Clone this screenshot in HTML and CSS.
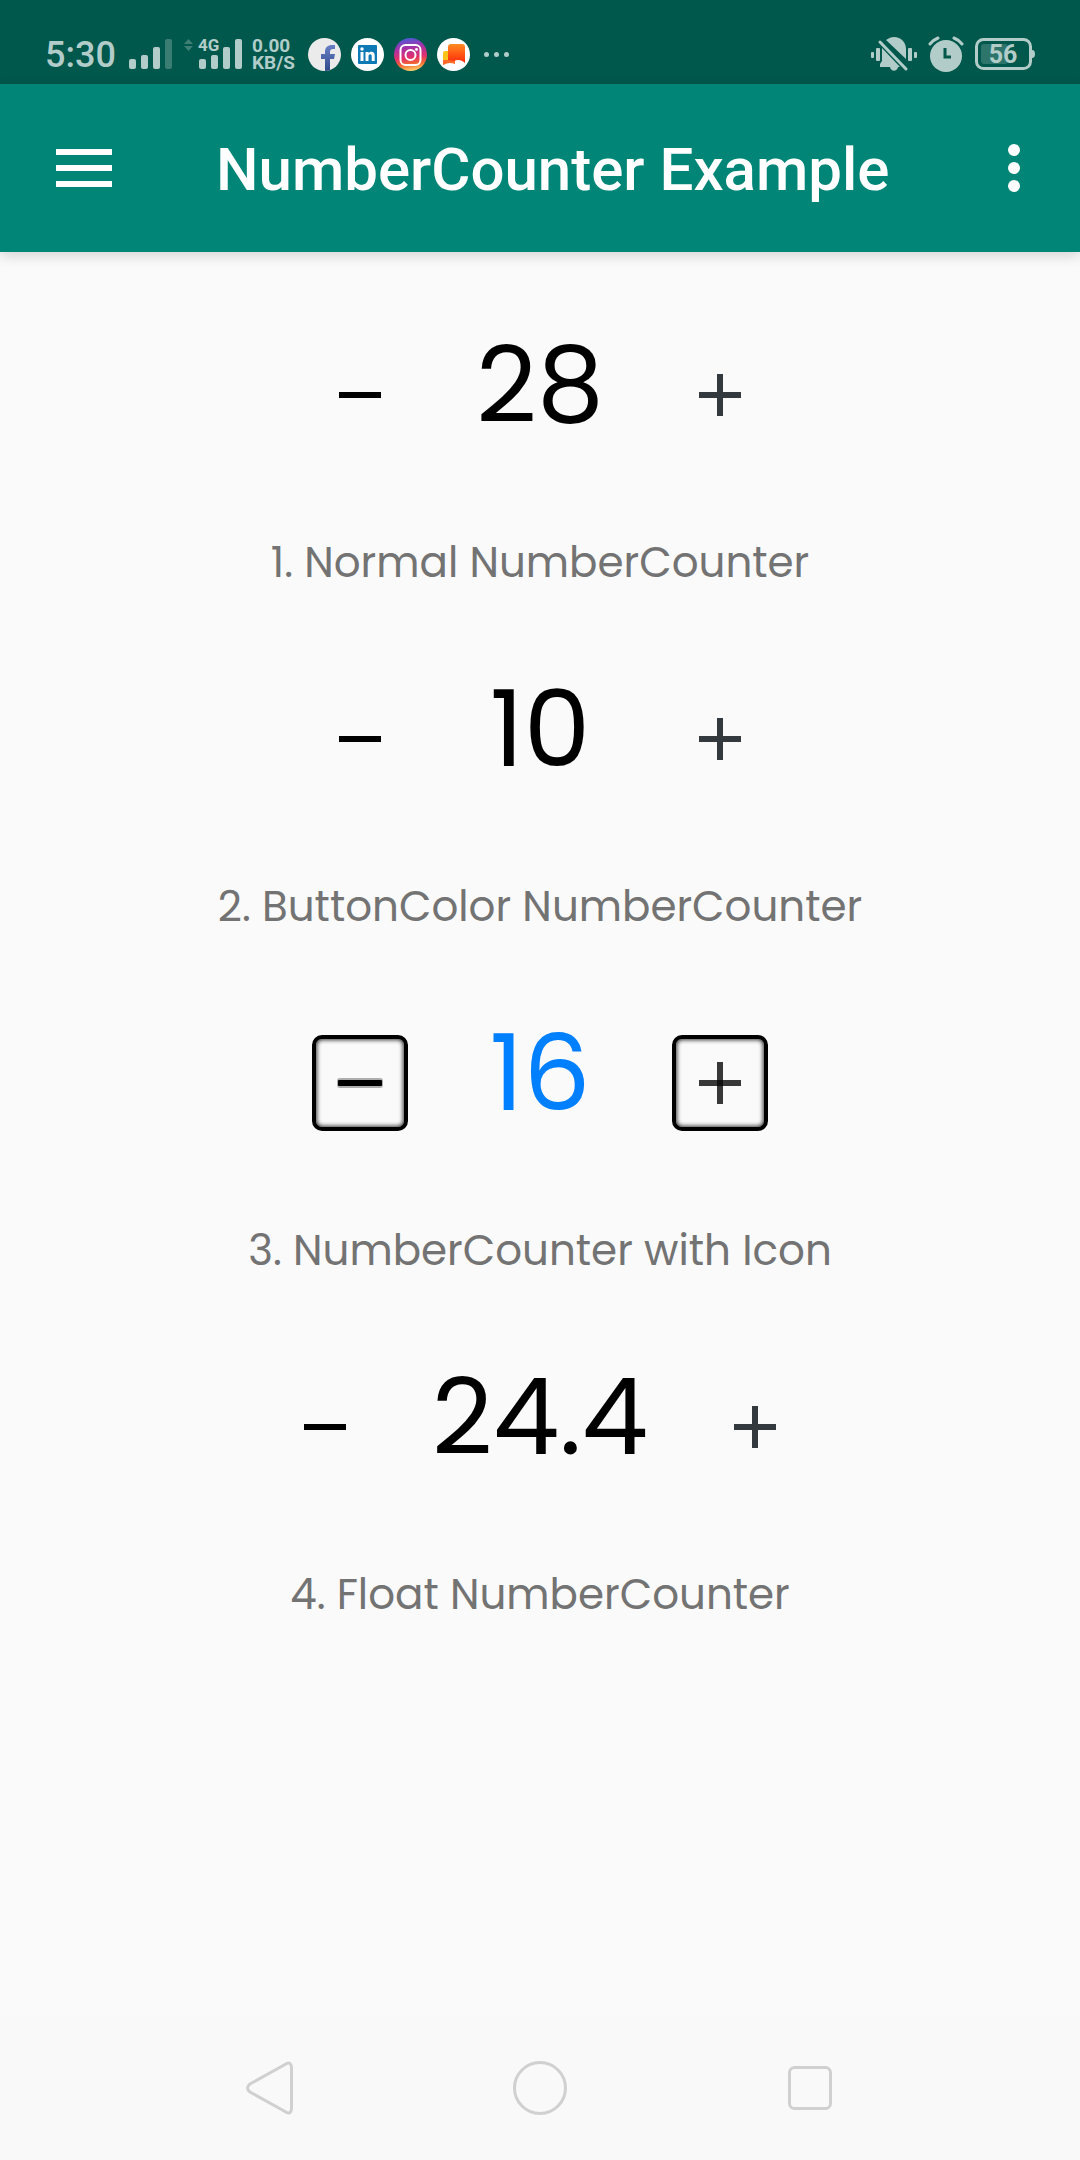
FILE: index.html
```html
<!DOCTYPE html>
<html lang="en">
<head>
<meta charset="utf-8">
<meta name="viewport" content="width=device-width, initial-scale=1">
<title>NumberCounter Example</title>
<link rel="stylesheet" href="styles.css">
</head>
<body>
<div class="status">
  <div class="status-side">
    <span class="clock">5:30</span>
    <svg class="signal" width="43" height="30" viewBox="0 0 43 30" aria-hidden="true"><g fill="currentColor"><rect y="20" width="7" height="10" rx="2"/><rect x="12" y="16" width="7" height="14" rx="2"/><rect x="24" y="8" width="7" height="22" rx="2"/><rect x="36" width="7" height="30" rx="2" opacity=".32"/></g></svg>
    <svg class="signal-data" width="58" height="46" viewBox="0 -8 58 46" aria-hidden="true"><g fill="currentColor"><path d="M0 5 4.500 0 9 5zM0 7h9l-4.500 5z" opacity=".35"/><rect x="15" y="20" width="7" height="10" rx="2"/><rect x="27" y="16" width="7" height="14" rx="2"/><rect x="39" y="8" width="7" height="22" rx="2"/><rect x="51" width="7" height="30" rx="2"/><text class="net" x="14" y="12">4G</text></g></svg>
    <span class="speed"><span>0.00</span><span>KB/S</span></span>
    <span class="apps">
      <svg width="33" height="33" viewBox="0 0 33 33" aria-hidden="true"><defs><linearGradient id="fb" x2="0" y2="1"><stop stop-color="#6a80c6"/><stop offset="1" stop-color="#2f4a8c"/></linearGradient><clipPath id="disc"><circle cx="16.500" cy="16.500" r="16.500"/></clipPath></defs><g clip-path="url(#disc)"><path fill="#ebebeb" d="M0 0h33v33H0z"/><path fill="url(#fb)" d="M17 33V21h-4v-5h4v-2c0-5 3-7 7-7h3v4h-2c-2 0-3 1-3 3v2h5l-1 5h-4v12z"/></g></svg>
      <svg width="33" height="33" viewBox="0 0 33 33" aria-hidden="true"><circle cx="16.500" cy="16.500" r="16.500" fill="#fff"/><rect x="7" y="7" width="19" height="19" rx="1" fill="#0d79b5"/><g fill="#fff"><circle cx="11" cy="11" r="1.700"/><path d="M9.500 14h3v9h-3zM14.500 14h3v1.300c.6-1 1.600-1.500 2.900-1.500 2.600 0 3.300 1.700 3.300 4.200v5h-3v-4.500c0-1.200-.2-2.200-1.500-2.200s-1.700 1-1.700 2.200V23h-3z"/></g></svg>
      <svg width="33" height="33" viewBox="0 0 33 33" aria-hidden="true"><defs><linearGradient id="ig" x1=".35" y1="0" x2=".5" y2="1"><stop stop-color="#4b5bd8"/><stop offset=".3" stop-color="#a632a8"/><stop offset=".6" stop-color="#e2306c"/><stop offset=".8" stop-color="#f46a30"/><stop offset="1" stop-color="#ffd36b"/></linearGradient></defs><circle cx="16.500" cy="16.500" r="16.500" fill="url(#ig)"/><g fill="none" stroke="#fff" stroke-width="2"><rect x="6.500" y="7" width="20" height="20" rx="5"/><circle cx="16.500" cy="17" r="5"/></g><circle cx="22.500" cy="11.500" r="1.400" fill="#fff"/></svg>
      <svg width="33" height="33" viewBox="0 0 33 33" aria-hidden="true"><defs><linearGradient id="ch" x2="0" y2="1"><stop stop-color="#ff8a1f"/><stop offset="1" stop-color="#ff2a0a"/></linearGradient></defs><circle cx="16.500" cy="16.500" r="16.500" fill="#fff"/><path fill="#ffc21a" d="M8 13h6v10l-8 4V15q0-2 2-2z"/><path fill="#ff6a2b" d="M6 27v-5h12v4c-5-2-8-1-12 1z"/><path fill="url(#ch)" d="M14 6h11q3 0 3 3v16c-3-3-7-4-11-2l-6-1V9q0-3 3-3z"/></svg>
    </span>
    <svg width="25" height="5" viewBox="0 0 25 5" aria-hidden="true"><g fill="currentColor"><circle cx="2.500" cy="2.500" r="2.500"/><circle cx="12.500" cy="2.500" r="2.500"/><circle cx="22.500" cy="2.500" r="2.500"/></g></svg>
  </div>
  <div class="status-side status-right">
    <svg width="46" height="36" viewBox="0 0 46 36" aria-hidden="true"><g fill="currentColor"><rect y="16" width="3" height="6" rx="1"/><rect x="5" y="12" width="4" height="13" rx="1"/><rect x="37" y="12" width="4" height="13" rx="1"/><rect x="43" y="16" width="3" height="6" rx="1"/><path d="M15 4C18 2 20 1 23 1c7 0 12 5 12 12v10zM11 12l18 19h-2c-1 5-7 5-8 0H9v-3l2-3z"/></g><path d="M9 6l26 27" stroke="currentColor" stroke-width="3" stroke-linecap="round"/></svg>
    <svg width="36" height="36" viewBox="0 0 36 36" aria-hidden="true"><circle cx="18" cy="20" r="16" fill="currentColor"/><g fill="none" stroke="currentColor" stroke-width="3" stroke-linecap="round"><path d="M2 8q3-4 8-6M34 8q-3-4-8-6"/></g><path d="M17 12v9h6" fill="none" stroke="#00574b" stroke-width="3"/></svg>
    <svg width="60" height="32" viewBox="0 0 60 32" aria-hidden="true"><rect x="1.500" y="1.500" width="54" height="29" rx="7" fill="none" stroke="currentColor" stroke-width="3"/><rect x="6" y="6" width="27" height="20" rx="3" fill="currentColor" opacity=".25"/><path d="M57 12q3 0 3 4t-3 4z" fill="currentColor"/><text class="charge" x="28" y="25" text-anchor="middle">56</text></svg>
  </div>
</div>
<header class="bar">
  <button class="icon-btn" type="button" aria-label="Open menu"><svg width="56" height="38" viewBox="0 0 56 38"><path d="M0 0h56v6H0zM0 16h56v6H0zM0 32h56v6H0z" fill="#fff"/></svg></button>
  <h1>NumberCounter Example</h1>
  <button class="icon-btn" type="button" aria-label="More options"><svg width="12" height="48" viewBox="0 0 12 48"><g fill="#fff"><circle cx="6" cy="6" r="6"/><circle cx="6" cy="24" r="6"/><circle cx="6" cy="42" r="6"/></g></svg></button>
</header>
<main>
  <section class="item">
    <div class="counter">
      <button class="step" type="button" aria-label="Decrease"><svg width="42" height="42" viewBox="0 0 42 42"><path d="M0 18h42v6H0z"/></svg></button>
      <output aria-labelledby="l1">28</output>
      <button class="step" type="button" aria-label="Increase"><svg width="42" height="42" viewBox="0 0 42 42"><path d="M18 0h6v18h18v6H24v18h-6V24H0v-6h18z" fill="#34393d"/></svg></button>
    </div>
    <p id="l1">1. Normal NumberCounter</p>
  </section>
  <section class="item">
    <div class="counter">
      <button class="step" type="button" aria-label="Decrease"><svg width="42" height="42" viewBox="0 0 42 42"><path d="M0 18h42v6H0z"/></svg></button>
      <output aria-labelledby="l2">10</output>
      <button class="step" type="button" aria-label="Increase"><svg width="42" height="42" viewBox="0 0 42 42"><path d="M18 0h6v18h18v6H24v18h-6V24H0v-6h18z" fill="#34393d"/></svg></button>
    </div>
    <p id="l2">2. ButtonColor NumberCounter</p>
  </section>
  <section class="item">
    <div class="counter">
      <button class="step boxed" type="button" aria-label="Decrease"><svg width="48" height="42" viewBox="0 0 48 42"><rect x="1" y="16" width="46" height="10" rx="3" opacity=".3"/><rect x="2" y="18" width="44" height="6" rx="1"/></svg></button>
      <output class="blue" aria-labelledby="l3">16</output>
      <button class="step boxed" type="button" aria-label="Increase"><svg width="42" height="42" viewBox="0 0 42 42"><path d="M18 0h6v18h18v6H24v18h-6V24H0v-6h18z" fill="#383838"/><path d="M18 18h6v6h-6z" fill="#111"/></svg></button>
    </div>
    <p id="l3">3. NumberCounter with Icon</p>
  </section>
  <section class="item">
    <div class="counter">
      <button class="step" type="button" aria-label="Decrease"><svg width="42" height="42" viewBox="0 0 42 42"><path d="M0 18h42v6H0z"/></svg></button>
      <output aria-labelledby="l4">24.4</output>
      <button class="step" type="button" aria-label="Increase"><svg width="42" height="42" viewBox="0 0 42 42"><path d="M18 0h6v18h18v6H24v18h-6V24H0v-6h18z" fill="#34393d"/></svg></button>
    </div>
    <p id="l4">4. Float NumberCounter</p>
  </section>
</main>
<nav class="nav" aria-label="System">
  <button type="button" aria-label="Back"><svg width="54" height="54" viewBox="0 0 54 54"><path d="M42 3.500Q47.500-.5 48.500 6v42q-1 6.500-6.500 2.500L7 31q-5-4 0-8z"/></svg></button>
  <button type="button" aria-label="Home"><svg width="54" height="54" viewBox="0 0 54 54"><circle cx="27" cy="27" r="25.500"/></svg></button>
  <button type="button" aria-label="Recent apps"><svg width="54" height="54" viewBox="0 0 54 54"><rect x="6.500" y="6.500" width="41" height="41" rx="5"/></svg></button>
</nav>
</body>
</html>
```

FILE: styles.css
```css
* { box-sizing: border-box; }

body {
  margin: 0;
  min-height: 100vh;
  display: flex;
  flex-direction: column;
  background: #fafafa;
  color: #000;
  font-family: Poppins, Inter, sans-serif;
}

button {
  padding: 0;
  border: 0;
  background: none;
}

svg { display: block; flex: none; }

.status {
  display: flex;
  justify-content: space-between;
  height: 84px;
  padding: 24px 45px 0;
  background: #00574b;
  color: #b2cdc9;
  font-family: Roboto, sans-serif;
  font-weight: 500;
}

.status-side { display: flex; align-items: center; }
.clock { width: 84px; padding-top: 2px; font-size: 36px; line-height: 36px; }
.signal { margin-right: 12px; }
.signal-data { margin-right: 10px; }
.net { font-size: 17px; font-weight: 700; }

.speed {
  display: flex;
  flex-direction: column;
  width: 56px;
  font-size: 19px;
  font-weight: 700;
  line-height: 17px;
}

.apps { display: flex; gap: 10px; margin-right: 14px; }
.status-right { gap: 11px; }
.charge { font-size: 25px; font-weight: 700; fill: #b2cdc9; }

.bar {
  display: flex;
  align-items: center;
  justify-content: space-between;
  height: 168px;
  padding: 0 60px 0 56px;
  background: #008577;
  box-shadow: 0 4px 12px rgba(0, 0, 0, .15);
  font-family: Roboto, sans-serif;
}

.bar h1 {
  flex: 1;
  margin: 0 0 0 104px;
  padding-top: 4px;
  color: #fff;
  font-size: 60px;
  font-weight: 500;
  line-height: 70px;
}

main { flex: 1; }
.item { padding-top: 8px; text-align: center; }

.counter {
  display: flex;
  align-items: center;
  justify-content: center;
  height: 270px;
}

.step {
  display: grid;
  place-items: center;
  width: 96px;
  height: 96px;
}

.boxed {
  border: 4px solid #000;
  border-radius: 10px;
  box-shadow: inset 0 0 4px 1px #333;
}

output {
  min-width: 264px;
  padding: 0 59px 20px;
  font-size: 106px;
  line-height: 120px;
}

.blue { color: #007fff; }

.item p {
  margin: 0;
  color: #737373;
  font-size: 42px;
  line-height: 66px;
}

.nav {
  display: flex;
  justify-content: center;
  gap: 216px;
  height: 144px;
  background: #f9f9f9;
}

.nav svg { fill: none; stroke: #d0d0d0; stroke-width: 3; }
```
